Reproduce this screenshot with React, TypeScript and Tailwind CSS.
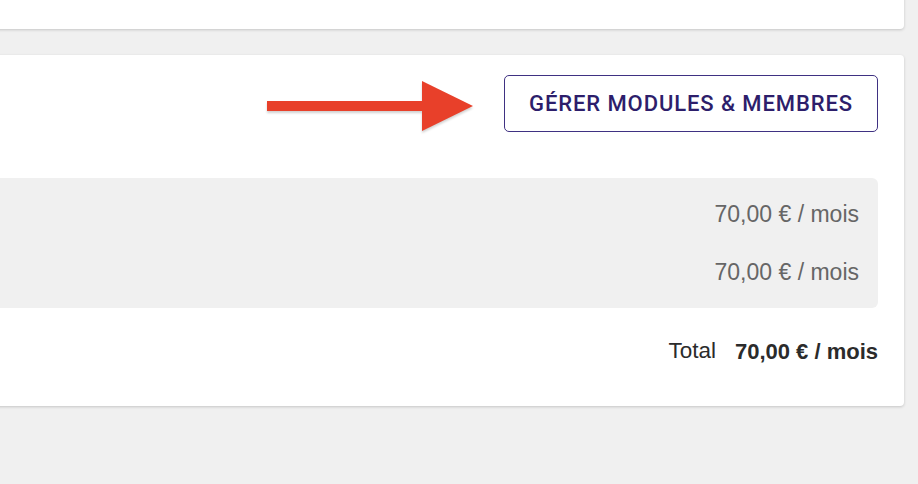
export default function App() {
  return (
    <div className="min-h-[484px] w-[918px] overflow-hidden bg-[#f0f0f0] pr-[14px] font-['Liberation_Sans',Arial,sans-serif]">
      <div className="-ml-4 -mt-4 h-[45px] rounded-b-[4px] bg-white shadow-[0_1px_3px_rgba(0,0,0,0.18)]" />

      <div className="-ml-4 mt-[26px] rounded-[4px] bg-white pb-[40px] pr-[26px] pt-[20px] shadow-[0_1px_3px_rgba(0,0,0,0.18)]">
        <div className="flex items-center justify-end gap-[30px]">
          <svg
            width="207"
            height="52"
            viewBox="0 0 207 52"
            className="mt-[5px] drop-shadow-[0_2px_1px_rgba(0,0,0,0.18)]"
          >
            <rect x="0" y="21" width="158" height="10" fill="#e8402a" />
            <polygon points="155,1 206,26 155,51" fill="#e8402a" />
          </svg>
          <button className="h-[57px] rounded-[5px] border-[1.5px] border-[#3f3182] px-[24px] font-['Roboto',sans-serif] text-[22px] font-medium tracking-[0.9px] text-[#2d1e6b]">
            GÉRER MODULES &amp; MEMBRES
          </button>
        </div>

        <div className="mt-[46px] rounded-[6px] bg-[#f0f0f0] py-[7px] pr-[19px]">
          <div className="flex h-[58px] items-center justify-end text-[23px] text-[#666]">
            70,00 € / mois
          </div>
          <div className="flex h-[58px] items-center justify-end text-[23px] text-[#666]">
            70,00 € / mois
          </div>
        </div>

        <div className="mt-[28px] flex h-[30px] items-center justify-end gap-[19px] text-[#2b2b2b]">
          <span className="text-[22.5px]">Total</span>
          <span className="text-[22px] font-bold">70,00 € / mois</span>
        </div>
      </div>
    </div>
  );
}
